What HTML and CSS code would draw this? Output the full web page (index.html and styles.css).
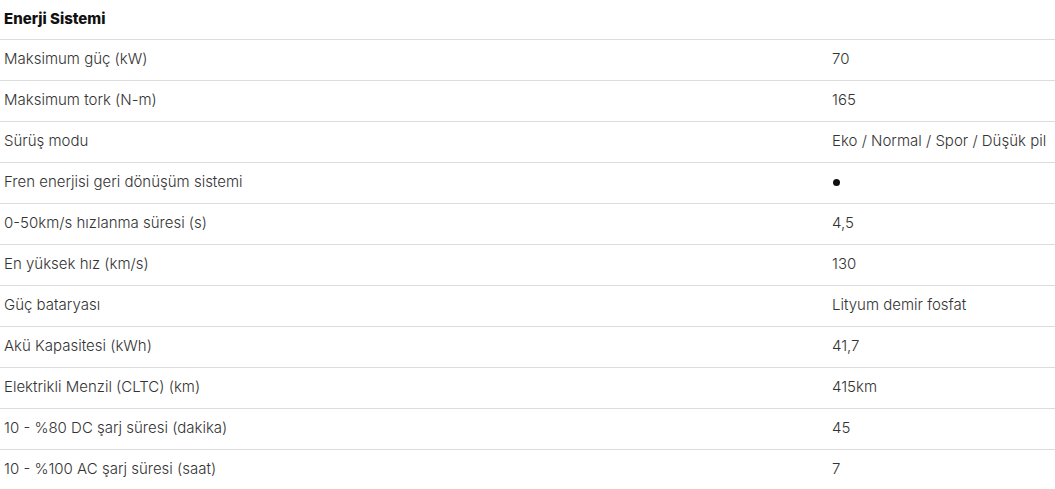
FILE: index.html
```html
<!DOCTYPE html>
<html lang="tr">
<head>
<meta charset="utf-8">
<link rel="stylesheet" href="styles.css">
</head>
<body>
<table class="spec">
  <thead>
    <tr><th colspan="2">Enerji Sistemi</th></tr>
  </thead>
  <tbody>
    <tr><td class="label">Maksimum güç (kW)</td><td class="value">70</td></tr>
    <tr><td class="label">Maksimum tork (N-m)</td><td class="value">165</td></tr>
    <tr><td class="label">Sürüş modu</td><td class="value">Eko / Normal / Spor / Düşük pil</td></tr>
    <tr><td class="label">Fren enerjisi geri dönüşüm sistemi</td><td class="value"><span class="dot" aria-label="var"></span></td></tr>
    <tr><td class="label">0-50km/s hızlanma süresi (s)</td><td class="value">4,5</td></tr>
    <tr><td class="label">En yüksek hız (km/s)</td><td class="value">130</td></tr>
    <tr><td class="label">Güç bataryası</td><td class="value">Lityum demir fosfat</td></tr>
    <tr><td class="label">Akü Kapasitesi (kWh)</td><td class="value">41,7</td></tr>
    <tr><td class="label">Elektrikli Menzil (CLTC) (km)</td><td class="value">415km</td></tr>
    <tr><td class="label">10 - %80 DC şarj süresi (dakika)</td><td class="value">45</td></tr>
    <tr><td class="label">10 - %100 AC şarj süresi (saat)</td><td class="value">7</td></tr>
  </tbody>
</table>
</body>
</html>
```
FILE: styles.css
```css
html, body {
  margin: 0;
  padding: 0;
  background: #fff;
}
body {
  font-family: "Inter", "Noto Sans", sans-serif;
  color: #333;
  font-size: 15px;
}
.spec {
  width: 100%;
  border-collapse: collapse;
}
.spec th {
  text-align: left;
  font-weight: 800;
  font-size: 15px;
  color: #111;
  box-sizing: border-box;
  height: 39px;
  padding: 0 4px 1px;
  border-bottom: 1px solid #dcdcdc;
  vertical-align: middle;
}
.spec td {
  box-sizing: border-box;
  height: 41px;
  padding: 0 4px 2px;
  border-bottom: 1px solid #dcdcdc;
  vertical-align: middle;
  font-weight: 300;
}
.spec td.label {
  width: 832px;
}
.spec td.value {
  padding-left: 0;
}
.dot {
  display: inline-block;
  width: 7px;
  height: 7px;
  border-radius: 50%;
  background: #111;
  vertical-align: middle;
  margin-left: 1px;
}
```
